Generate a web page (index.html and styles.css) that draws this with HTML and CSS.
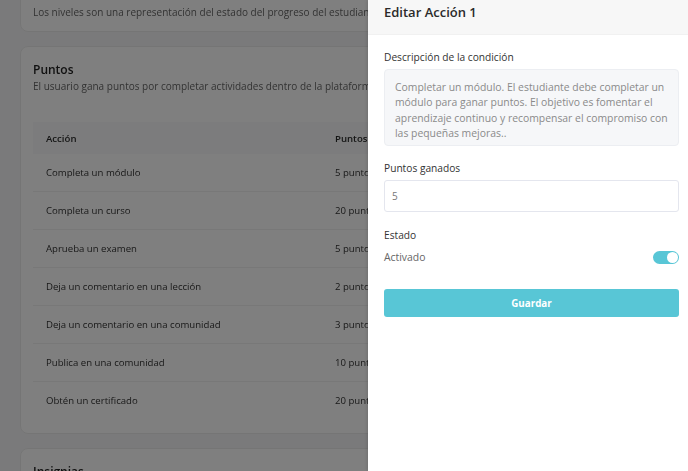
FILE: index.html
```html
<!DOCTYPE html>
<html lang="es">
<head>
<meta charset="utf-8">
<title>Editar Acción 1</title>
<link rel="stylesheet" href="styles.css">
</head>
<body>
<main class="page">
  <section class="card card-first">
    <p class="card-desc">Los niveles son una representación del estado del progreso del estudiante en la plataforma.</p>
  </section>
  <section class="card card-points">
    <h2 class="card-title">Puntos</h2>
    <p class="card-desc">El usuario gana puntos por completar actividades dentro de la plataforma.</p>
    <table class="points-table">
      <colgroup><col class="col-action"><col class="col-points"><col></colgroup>
      <thead>
        <tr><th>Acción</th><th>Puntos</th><th>Estado</th></tr>
      </thead>
      <tbody>
        <tr><td>Completa un módulo</td><td>5 puntos</td><td>Activado</td></tr>
        <tr><td>Completa un curso</td><td>20 puntos</td><td>Activado</td></tr>
        <tr><td>Aprueba un examen</td><td>5 puntos</td><td>Activado</td></tr>
        <tr><td>Deja un comentario en una lección</td><td>2 puntos</td><td>Activado</td></tr>
        <tr><td>Deja un comentario en una comunidad</td><td>3 puntos</td><td>Activado</td></tr>
        <tr><td>Publica en una comunidad</td><td>10 puntos</td><td>Activado</td></tr>
        <tr><td>Obtén un certificado</td><td>20 puntos</td><td>Activado</td></tr>
      </tbody>
    </table>
  </section>
  <section class="card">
    <h2 class="card-title">Insignias</h2>
    <p class="card-desc">Las insignias reconocen los logros del estudiante.</p>
  </section>
</main>
<div class="backdrop"></div>
<aside class="drawer">
  <header class="drawer-header">
    <h1 class="drawer-title">Editar Acción 1</h1>
  </header>
  <div class="drawer-body">
    <div class="field">
      <label class="field-label">Descripción de la condición</label>
      <div class="textarea">Completar un módulo. El estudiante debe completar un módulo para ganar puntos. El objetivo es fomentar el aprendizaje continuo y recompensar el compromiso con las pequeñas mejoras..</div>
    </div>
    <div class="field">
      <label class="field-label">Puntos ganados</label>
      <div class="input">5</div>
    </div>
    <div class="field">
      <span class="field-label">Estado</span>
      <div class="switch-row">
        <span class="switch-label">Activado</span>
        <span class="switch"><span class="switch-knob"></span></span>
      </div>
    </div>
    <button class="btn-save">Guardar</button>
  </div>
</aside>
</body>
</html>
```

FILE: styles.css
```css
* { box-sizing: border-box; }
html, body {
  margin: 0;
  height: 100%;
  overflow: hidden;
}
body {
  font-family: "Open Sans", "Liberation Sans", sans-serif;
  background: #f4f5f7;
  color: #2b2b2b;
  position: relative;
}
.page {
  padding: 0 20px;
  margin-top: -20px;
  display: flex;
  flex-direction: column;
  gap: 14px;
  filter: blur(0.5px);
}
.card {
  background: #ffffff;
  border: 1px solid #ebebeb;
  border-radius: 8px;
  padding: 15px 12px 14px;
}
.card-first {
  padding: 23px 12px 11px;
}
.card-title {
  margin: 0;
  font-size: 12px;
  line-height: 16px;
  font-weight: 600;
  color: #222;
}
.card-desc {
  margin: 0;
  font-size: 10px;
  line-height: 16px;
  color: #666;
  white-space: nowrap;
}
.points-table {
  margin-top: 28px;
  width: 100%;
  border-collapse: collapse;
  table-layout: fixed;
  font-size: 9.6px;
}
.col-action { width: 289px; }
.col-points { width: 120px; }
.points-table th {
  background: #f8f9fa;
  text-align: left;
  font-weight: 600;
  color: #2b2b2b;
  height: 32px;
  padding: 0 13px;
  white-space: nowrap;
}
.points-table td {
  height: 37.9px;
  padding: 0 13px;
  color: #333;
  border-top: 1px solid #f0f0f0;
  white-space: nowrap;
}
.points-table tbody tr:first-child td { border-top: none; }
.backdrop {
  position: absolute;
  inset: 0;
  background: rgba(0, 0, 0, 0.5);
}
.drawer {
  position: absolute;
  top: 0;
  right: 0;
  width: 320px;
  height: 100%;
  background: #ffffff;
  box-shadow: -1px 0 3px rgba(0, 0, 0, 0.12);
}
.drawer-header {
  background: #f7f7f7;
  height: 35px;
  padding: 0 16px;
  display: flex;
  align-items: flex-start;
  border-bottom: 1px solid #f1f1f1;
}
.drawer-title {
  margin: 3px 0 0;
  font-size: 13px;
  line-height: 18px;
  font-weight: 600;
  color: #2a2a2a;
}
.drawer-body {
  padding: 14px 9px 0 16px;
  display: flex;
  flex-direction: column;
}
.field {
  display: flex;
  flex-direction: column;
  gap: 4px;
  margin-bottom: 13px;
}
.field-label {
  font-size: 10.2px;
  line-height: 16px;
  font-weight: 500;
  color: #333;
}
.textarea {
  background: #f6f7f9;
  border: 1px solid #eceef2;
  border-radius: 4px;
  padding: 10px 10px 4px;
  font-size: 10.4px;
  line-height: 15.3px;
  color: #8a8a8a;
  height: 77px;
  margin-bottom: 1px;
}
.input {
  height: 32px;
  border: 1px solid #e4e6ee;
  border-radius: 3px;
  padding: 0 7px;
  display: flex;
  align-items: center;
  font-size: 10px;
  color: #777;
  margin-bottom: 2px;
}
.switch-row {
  display: flex;
  align-items: center;
  justify-content: space-between;
  height: 16px;
  margin-top: 2px;
}
.switch-label {
  font-size: 10.4px;
  color: #666;
}
.switch {
  width: 26px;
  height: 13px;
  border-radius: 7px;
  background: #58c6d6;
  display: flex;
  align-items: center;
  justify-content: flex-end;
  padding: 1px;
}
.switch-knob {
  width: 11px;
  height: 11px;
  border-radius: 50%;
  background: #ffffff;
}
.btn-save {
  margin-top: 11px;
  height: 28px;
  border: none;
  border-radius: 3px;
  background: #58c6d6;
  color: #ffffff;
  font-family: inherit;
  font-size: 9.8px;
  font-weight: 700;
}
```
